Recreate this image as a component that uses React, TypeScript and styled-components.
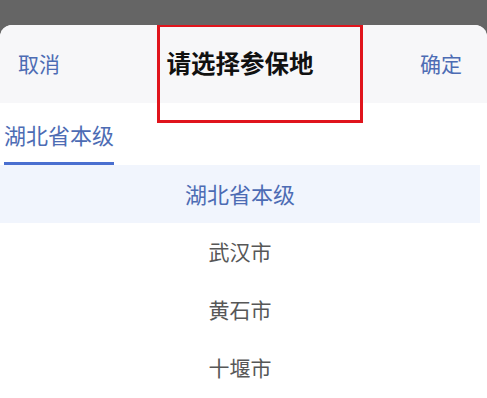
import React, { useState } from 'react';
import styled, { createGlobalStyle } from 'styled-components';

const GlobalStyle = createGlobalStyle`
  html, body {
    margin: 0;
    padding: 0;
    background: #656565;
    font-family: "Noto Sans CJK SC", "Noto Sans", sans-serif;
  }
`;

const cities = ['湖北省本级', '武汉市', '黄石市', '十堰市'];

const App: React.FC = () => {
  const [selected, setSelected] = useState(0);

  return (
    <>
      <GlobalStyle />
      <Page>
        <Sheet>
          <Header>
            <ActionButton>取消</ActionButton>
            <Title>请选择参保地</Title>
            <ActionButton>确定</ActionButton>
          </Header>
          <Tabs>
            <Tab $active>湖北省本级</Tab>
          </Tabs>
          <List>
            {cities.map((city, i) => (
              <Row key={city} $active={i === selected} onClick={() => setSelected(i)}>
                {city}
              </Row>
            ))}
          </List>
          {/* annotation box drawn over the title */}
          <Highlight />
        </Sheet>
      </Page>
    </>
  );
};

const Page = styled.div`
  width: 487px;
  height: 398px;
  padding-top: 25px;
  box-sizing: border-box;
  background: #656565;
  overflow: hidden;
`;

const Sheet = styled.div`
  position: relative;
  height: 373px;
  background: #fff;
  border-radius: 12px 12px 0 0;
  overflow: hidden;
`;

const Header = styled.div`
  height: 78px;
  display: flex;
  align-items: center;
  justify-content: space-between;
  padding: 0 25px 3px 18px;
  box-sizing: border-box;
  background: #f7f7f9;
`;

const ActionButton = styled.button`
  border: none;
  background: none;
  padding: 0;
  font-family: inherit;
  font-size: 21px;
  color: #4d6cb4;
  cursor: pointer;
`;

const Title = styled.div`
  font-size: 24.5px;
  font-weight: 700;
  color: #111;
`;

const Tabs = styled.div`
  height: 62px;
  display: flex;
  align-items: stretch;
  padding-left: 4px;
`;

const Tab = styled.div<{ $active?: boolean }>`
  display: flex;
  align-items: center;
  font-size: 22px;
  color: ${({ $active }) => ($active ? '#4d6cb4' : '#555')};
  border-bottom: 3px solid ${({ $active }) => ($active ? '#4a6fd0' : 'transparent')};
  padding-top: 2px;
`;

const List = styled.div`
  display: flex;
  flex-direction: column;
  padding-right: 7px;
`;

const Row = styled.div<{ $active?: boolean }>`
  height: 56px;
  padding-bottom: 2px;
  display: flex;
  align-items: center;
  justify-content: center;
  font-size: ${({ $active }) => ($active ? '22px' : '21px')};
  color: ${({ $active }) => ($active ? '#4d6cb4' : '#575757')};
  background: ${({ $active }) => ($active ? '#f1f5fd' : '#fff')};
  cursor: pointer;
`;

const Highlight = styled.div`
  position: absolute;
  left: 157px;
  top: -1px;
  width: 206px;
  height: 99px;
  box-sizing: border-box;
  border: 3px solid #e0141c;
  pointer-events: none;
`;

export default App;
